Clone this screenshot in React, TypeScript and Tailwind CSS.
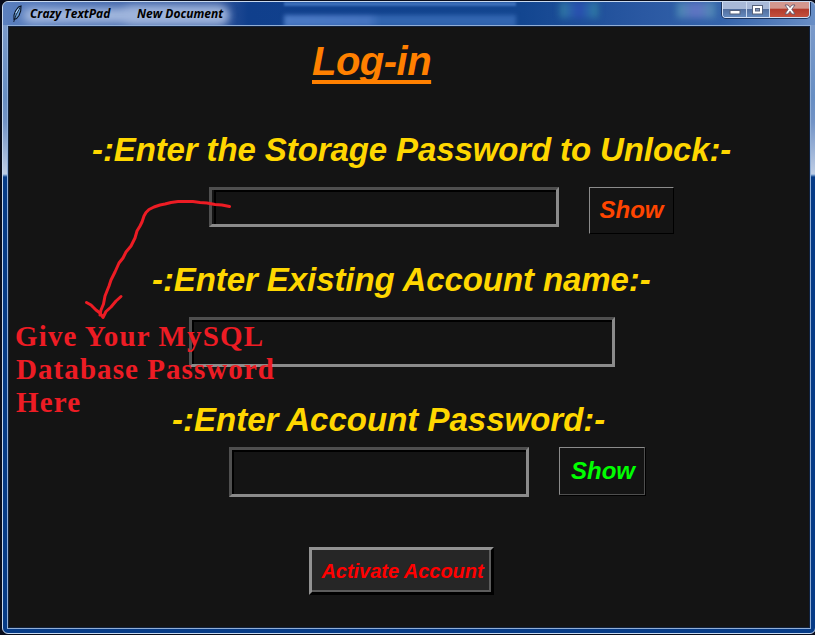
import React from "react";

function Feather() {
  return (
    <svg width="12" height="18" viewBox="0 0 12 18" className="ml-[8px]">
      <path d="M3 14.5 L3 10 L4.5 6 L7.5 2 L10 1 L9.7 6 L8 10.5 L5.5 13.5 Z" fill="#6b9fd6" stroke="#0a1423" strokeWidth="1.1" />
      <path d="M2.7 17 L5 10 L9 2.5" fill="none" stroke="#101a2c" strokeWidth="0.9" />
      <path d="M4.8 8 L7.5 3.6" stroke="#c1e0fa" strokeWidth="1" />
    </svg>
  );
}

function WindowControls() {
  return (
    <div className="mr-[5px] flex h-[16px] w-[88px] overflow-hidden rounded-b-[4px] border border-t-0 border-[#d2e0f5] shadow-[0_0_0_1px_#1d355e]">
      <div className="flex w-[24px] items-center justify-center border-r border-[#cbd9ee] bg-linear-to-b from-[#a8b9d8] from-45% via-[#526f9f] via-50% to-[#6489bd]">
        <svg width="12" height="6" viewBox="0 0 12 6" className="mt-[4px]"><rect x="1" y="1.5" width="10" height="3.5" fill="#fff" stroke="#56627b" /></svg>
      </div>
      <div className="flex w-[23px] items-center justify-center border-r border-[#cbd9ee] bg-linear-to-b from-[#a8b9d8] from-45% via-[#526f9f] via-50% to-[#6489bd]">
        <svg width="12" height="10" viewBox="0 0 12 10"><rect x=".5" y=".5" width="10" height="8.5" fill="#fff" stroke="#56627b" /><rect x="3.5" y="3.5" width="4" height="2.5" fill="#8294b8" stroke="#56627b" /></svg>
      </div>
      <div className="flex flex-1 items-center justify-center bg-linear-to-b from-[#d3978e] from-40% via-[#b33b2c] via-50% to-[#c4503d]">
        <svg width="12" height="11" viewBox="0 0 12 11"><path d="M1 1 H4 L6 3.5 L8 1 H11 L7.8 5.3 L11 10 H8 L6 7.2 L4 10 H1 L4.2 5.3 Z" fill="#fff" stroke="#655a6d" strokeWidth=".9" /></svg>
      </div>
    </div>
  );
}

function TitleBar() {
  return (
    <div className="relative flex h-[23px] items-start justify-between overflow-hidden rounded-t-[5px] bg-[linear-gradient(90deg,#5b80bf_0,#4a6fb2_60px,#33569c_215px,#103f8c_245px,#134690_520px,#2a58a2_640px,#3564ab_720px,#6a8fc6_814px)]">
      <div className="absolute top-[6px] left-[20px] h-[15px] w-[205px] rounded-full bg-[#a6bbe0] blur-[5px]" />
      <div className="absolute top-[4px] left-[120px] h-[18px] w-[105px] rounded-full bg-[#9fb4dc]/80 blur-[5px]" />
      <div className="absolute top-0 left-[281px] h-[4px] w-[232px] bg-[#3c6fba] blur-[1px]" />
      <div className="absolute top-[13px] left-[281px] h-[12px] w-[232px] bg-[linear-gradient(90deg,#4a79c4_0,#4674c0_84px,#3265b0_96px,#3265b0_100%)] blur-[2px]" />
      <div className="absolute top-0 left-[557px] h-[16px] w-[38px] bg-linear-to-r from-[#317da0] via-[#2949b0] to-[#3180a0] blur-[3px]" />
      <div className="absolute top-0 left-[674px] h-[16px] w-[38px] bg-linear-to-r from-[#4688af] via-[#6071c4] to-[#4c8bb2] blur-[3px]" />
      <div className="relative flex items-center font-['Open_Sans',sans-serif] text-[12px] leading-[23px] font-bold italic text-black">
        <Feather />
        <span className="ml-[7px] w-[107px] whitespace-nowrap">Crazy TextPad</span>
        <span className="whitespace-nowrap">New Document</span>
      </div>
      <div className="relative"><WindowControls /></div>
    </div>
  );
}

function Entry({ className, inset = false }: { className: string; inset?: boolean }) {
  return (
    <div className={`border-[3px] border-t-[#4f4f4f] border-r-[#8b8b8b] border-b-[#8b8b8b] border-l-[#4f4f4f] ${inset ? "pl-[2px]" : ""} ${className}`}>
      <input aria-label="entry" className="block h-full w-full border-t-2 border-l-2 border-black bg-[#141414] outline-none" />
    </div>
  );
}

function Prompt({ children, className }: { children: React.ReactNode; className: string }) {
  return <h2 className={`h-[40px] whitespace-nowrap text-[33px] leading-[40px] text-[#ffd700] ${className}`}>{children}</h2>;
}

function Annotation() {
  return (
    <svg width="300" height="260" viewBox="0 170 300 260" className="pointer-events-none absolute top-[170px] left-0">
      <g fill="none" stroke="#ed1c24" strokeWidth="3" strokeLinecap="round" strokeLinejoin="round">
        <path d="M229.5 206.5 L222 205 L215 204.5 L207 203 L200 202.5 L193 201.5 L178 201.5 L171 202.5 L165 204 L160 205 L154 207 L149 209.5 L146 212.5 L144 216 L142 222 L140 226 L137 231 L135 238 L131 246 L126 252 L123 258 L119 263 L115 272 L111 280 L109 286 L107 291 L105 296 L103.5 304 L101 310 L100 315" />
        <path d="M86.5 302.5 L91 305 L96 310 L100 313 L103 317.5 L106 311.5 L111 307 L116 301 L121 296.5" />
      </g>
      <g className="font-['Liberation_Serif',serif] text-[29px] font-bold" fill="#ed1c24">
        <text x="15" y="346" textLength="248">Give Your MySQL</text>
        <text x="16" y="379" textLength="258">Database Password</text>
        <text x="16" y="412" textLength="64">Here</text>
      </g>
    </svg>
  );
}

export default function App() {
  return (
    <div className="relative h-[635px] w-[815px] overflow-hidden bg-[#090d1c] pt-px pl-[2px]">
      <div className="h-[633px] w-[814px] rounded-[6px] border border-[#c8d9ef] bg-[linear-gradient(180deg,#809dcc_0,#678ec3_95px,#7293c6_120px,#becde5_172px,#7ba1d0_173px,#063b87_175px,#063b87_100%)]">
        <TitleBar />
        <main className="ml-[4px] h-[604px] w-[804px] border border-[#91aed6] bg-[#141414] font-['Liberation_Sans',sans-serif] font-bold italic shadow-[inset_0_0_0_1px_#10213d]">
          <h1 className="mt-[11px] ml-[304px] h-[48px] w-fit text-[40px] leading-[48px] tracking-[-0.5px] text-[#ff8000] underline decoration-[4px] underline-offset-[4.5px] [text-decoration-skip-ink:none]">Log-in</h1>
          <Prompt className="mt-[45px] ml-[84px] tracking-[-0.11px]">-:Enter the Storage Password to Unlock:-</Prompt>
          <div className="mt-[17px] ml-[201px] flex h-[47px] gap-[30px]">
            <Entry inset className="h-[40px] w-[350px]" />
            <button className="h-[47px] w-[85px] border border-t-[#8b8b8b] border-r-black border-b-black border-l-[#8b8b8b] pb-[2px] text-[24px] italic text-[#ff4500]">Show</button>
          </div>
          <Prompt className="mt-[26px] ml-[144px] tracking-[-0.08px]">-:Enter Existing Account name:-</Prompt>
          <Entry className="mt-[17px] ml-[181px] h-[50px] w-[426px]" />
          <Prompt className="mt-[33px] ml-[164px]">-:Enter Account Password:-</Prompt>
          <div className="mt-[7px] ml-[221px] flex h-[50px] gap-[30px]">
            <Entry className="h-[50px] w-[300px]" />
            <button className="h-[48px] w-[86px] border border-t-[#8b8b8b] border-r-[#4f4f4f] border-b-[#4f4f4f] border-l-[#8b8b8b] pl-[2px] text-[24px] italic text-[#00ff00] shadow-[1px_1px_0_black]">Show</button>
          </div>
          <button className="mt-[50px] ml-[301px] block h-[48px] w-[185px] border-[3px] border-t-[#929292] border-r-black border-b-black border-l-[#929292] bg-[#262626] pl-[2px] text-[20px] tracking-[-0.03px] whitespace-nowrap italic text-[#ff0000] shadow-[inset_-2px_-2px_0_#5c5c5c]">Activate Account</button>
        </main>
      </div>
      <Annotation />
    </div>
  );
}
